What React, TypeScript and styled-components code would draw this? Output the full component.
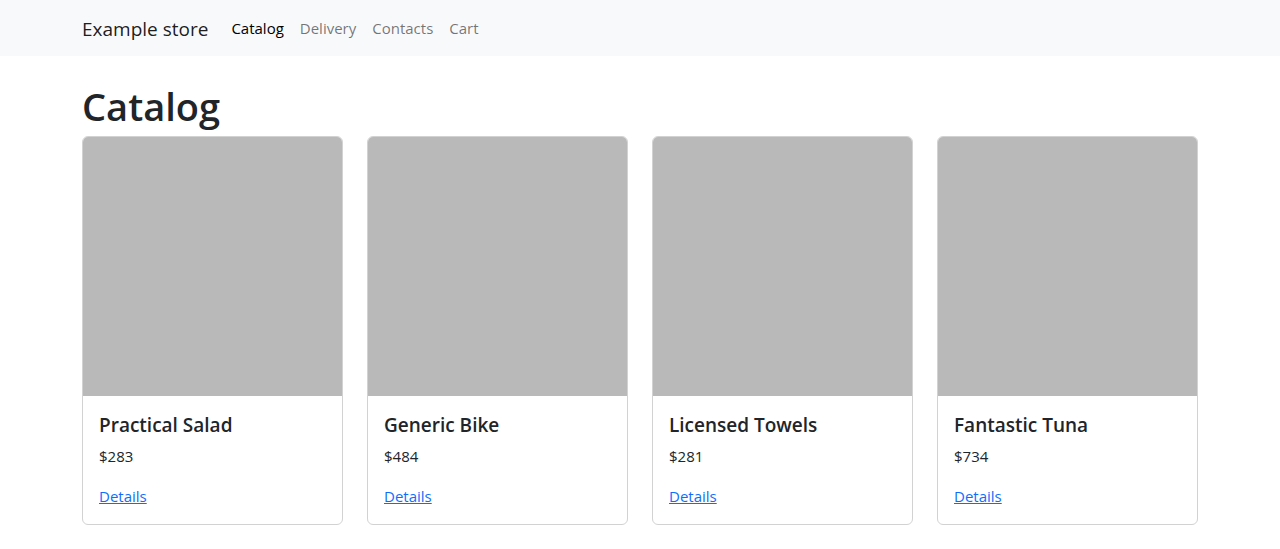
import React from 'react';
import styled, { createGlobalStyle } from 'styled-components';

const GlobalStyle = createGlobalStyle`
  *, *::before, *::after { box-sizing: border-box; }
  body {
    margin: 0;
    background: #fff;
    color: #212529;
    font: 400 15px/24px "Segoe UI", "Open Sans", "Noto Sans", sans-serif;
  }
`;

const Container = styled.div`
  width: 100%;
  max-width: 1140px;
  margin: 0 auto;
  padding: 0 12px;
`;

const Navbar = styled.nav`
  padding: 8px 0;
  background: #f8f9fb;
`;

const NavRow = styled(Container)`
  display: flex;
  flex-wrap: wrap;
  align-items: center;
`;

const Brand = styled.a`
  margin-right: 15px;
  padding: 6px 0 4px;
  color: rgba(0, 0, 0, 0.9);
  font-size: 19px;
  line-height: 30px;
  text-decoration: none;
`;

const NavList = styled.ul`
  display: flex;
  flex-wrap: wrap;
  margin: 0;
  padding: 0;
  list-style: none;
`;

const NavLink = styled.a<{ $active?: boolean }>`
  display: block;
  padding: 8px;
  color: ${({ $active }) => ($active ? '#000' : 'rgba(0, 0, 0, 0.55)')};
  text-decoration: none;
`;

const Main = styled.main`
  padding: 26px 0 24px;
`;

const Title = styled.h1`
  margin: 0 0 6px;
  font-size: 38px;
  font-weight: 600;
  line-height: 48px;
`;

const ProductGrid = styled.div`
  display: grid;
  grid-template-columns: repeat(auto-fill, minmax(240px, 1fr));
  gap: 24px;
`;

const Card = styled.article`
  overflow: hidden;
  border: 1px solid #d2d2d2;
  border-radius: 6px;
  background: #fff;
`;

const Photo = styled.div`
  aspect-ratio: 1;
  background: #b9b9b9;
`;

const CardBody = styled.div`
  padding: 16px;
`;

const ProductName = styled.h2`
  margin: 0 0 6px;
  font-size: 19px;
  font-weight: 600;
  line-height: 26px;
`;

const Price = styled.p`
  margin: 0 0 16px;
`;

const DetailsLink = styled.a`
  color: #0d6efd;
`;

const sections = ['Catalog', 'Delivery', 'Contacts', 'Cart'];

const products = [
  { name: 'Practical Salad', price: 283 },
  { name: 'Generic Bike', price: 484 },
  { name: 'Licensed Towels', price: 281 },
  { name: 'Fantastic Tuna', price: 734 },
];

export default function App() {
  return (
    <>
      <GlobalStyle />
      <Navbar>
        <NavRow>
          <Brand href="#">Example store</Brand>
          <NavList>
            {sections.map((name, i) => (
              <li key={name}>
                <NavLink href="#" $active={i === 0} aria-current={i === 0 ? 'page' : undefined}>
                  {name}
                </NavLink>
              </li>
            ))}
          </NavList>
        </NavRow>
      </Navbar>
      <Main>
        <Container>
          <Title>Catalog</Title>
          <ProductGrid>
            {products.map(({ name, price }) => (
              <Card key={name}>
                <Photo />
                <CardBody>
                  <ProductName>{name}</ProductName>
                  <Price>{`$${price}`}</Price>
                  <DetailsLink href="#">Details</DetailsLink>
                </CardBody>
              </Card>
            ))}
          </ProductGrid>
        </Container>
      </Main>
    </>
  );
}
